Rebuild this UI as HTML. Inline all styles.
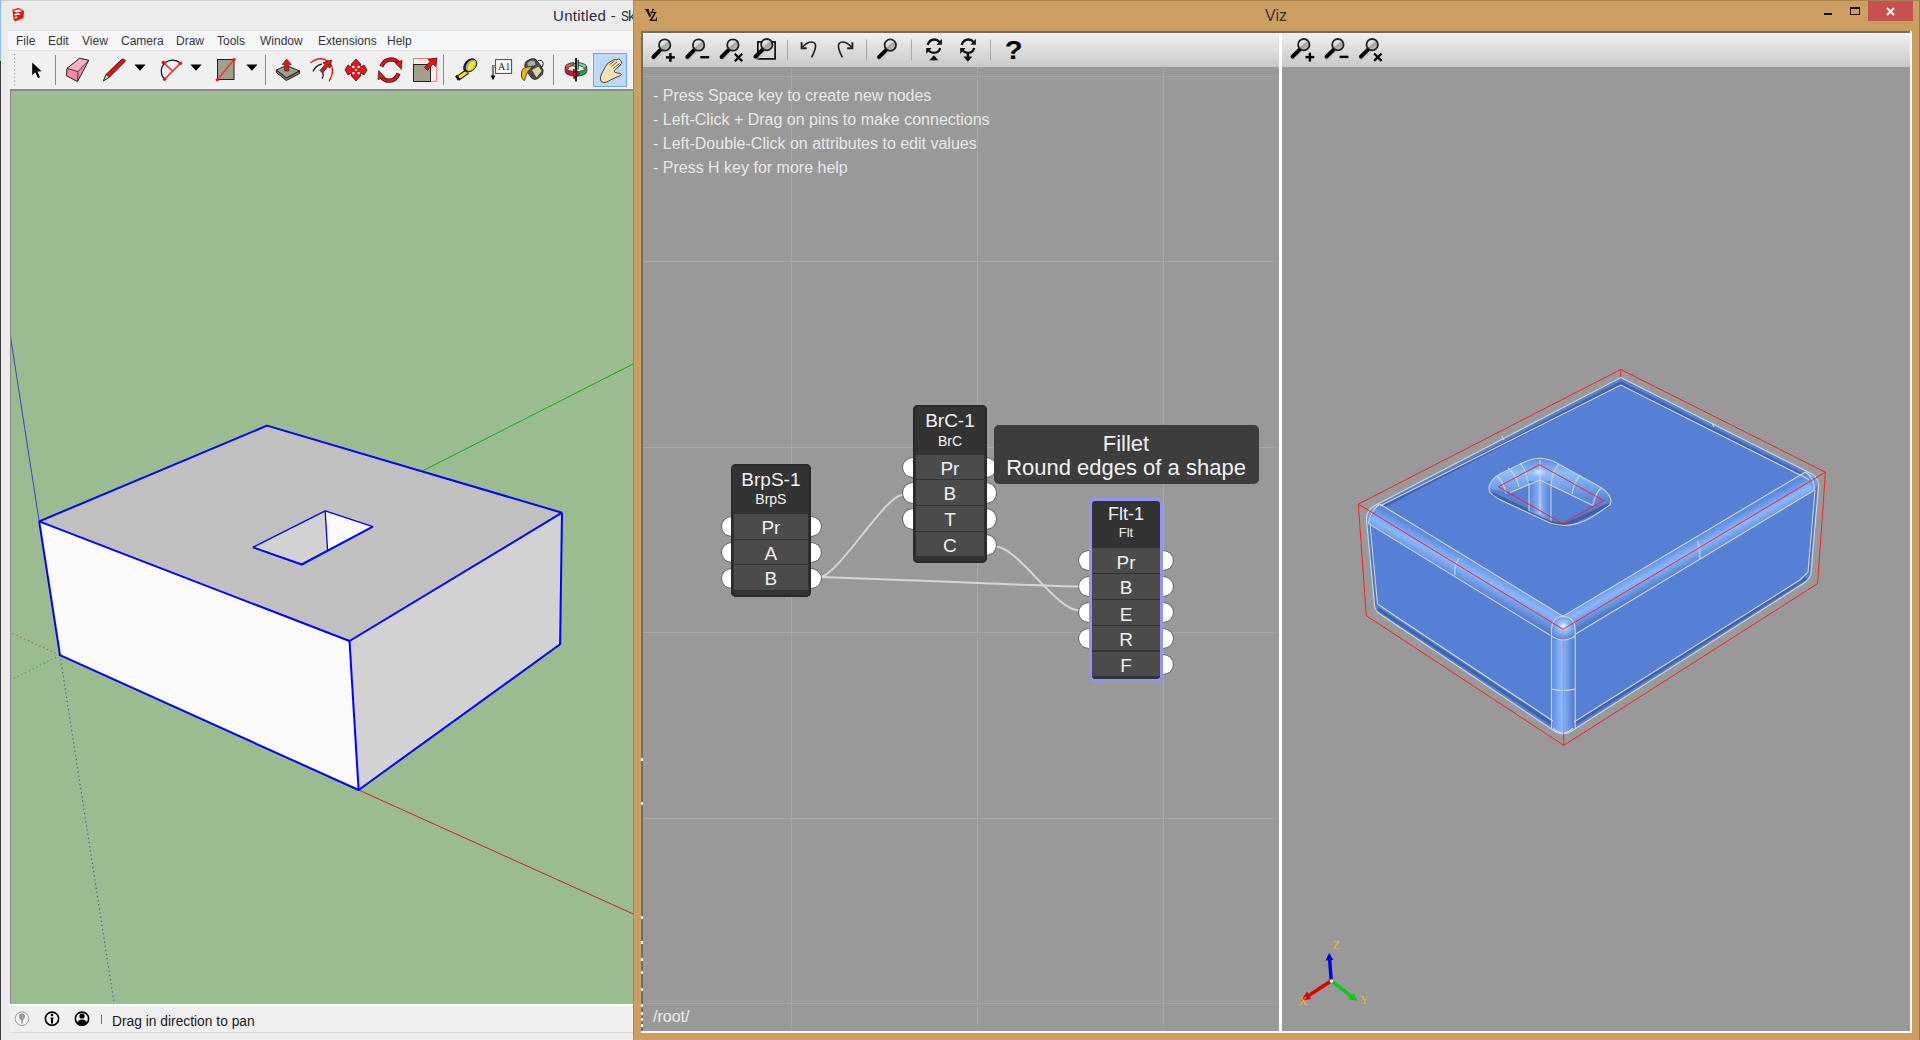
<!DOCTYPE html>
<html><head><meta charset="utf-8">
<style>
*{box-sizing:border-box;margin:0;padding:0}
html,body{width:1920px;height:1040px;overflow:hidden}
body{position:relative;background:#ebebeb;font-family:"Liberation Sans",sans-serif}
.a{position:absolute}
.menu span{position:absolute;top:3px;font-size:12px;color:#353540}
.ht{position:absolute;left:653px;margin-top:1px;font-size:16px;color:#e8e8e8;white-space:nowrap}
.node{position:absolute;background:#333;border-radius:5px;box-shadow:inset 0 0 0 2px #2a2a2a}
.node .t{position:absolute;left:0;right:0;text-align:center;color:#f2f2f2;white-space:nowrap}
.row{position:absolute;left:3px;right:3px;height:24px;background:#4b4b4b;color:#f0f0f0;font-size:19px;text-align:center;line-height:24px;padding-top:2px}
.pin{position:absolute;width:20px;height:19.5px;border-radius:50%;background:#fff;box-shadow:0 0 0 0.8px rgba(50,50,50,0.6)}
.flt{box-shadow:none;border-radius:2px}.flt .row{left:0;right:0}
</style></head>
<body>
<!-- ============ SketchUp window ============ -->
<div class="a" style="left:0;top:0;width:633px;height:1040px;background:#ebebeb"></div>
<div class="a" style="left:0;top:0;width:633px;height:1px;background:#cfcfcf"></div>
<div class="a" style="left:0;top:0;width:1px;height:61px;background:#8cbcf0"></div>
<div class="a" style="left:0;top:61px;width:1px;height:979px;background:#3a3a3a"></div>
<!-- title -->
<div class="a" style="left:553px;top:7px;font-size:15px;color:#2b2b3b;white-space:nowrap;letter-spacing:0.3px">Untitled - <span style="display:inline-block;width:7.6px;transform:scaleX(0.8);transform-origin:0 0">S</span>ketchUp</div>
<!-- menu bar -->
<div class="a menu" style="left:8px;top:30px;width:625px;height:20px;background:#f5f6f7;border-top:1px solid #dcdcdc">
<span style="left:8px">File</span><span style="left:40px">Edit</span><span style="left:74px">View</span><span style="left:113px">Camera</span><span style="left:168px">Draw</span><span style="left:209px">Tools</span><span style="left:252px">Window</span><span style="left:310px">Extensions</span><span style="left:379px">Help</span>
</div>
<!-- toolbar -->
<div class="a" style="left:8px;top:50px;width:625px;height:39px;background:#f0f0f0;border-top:1px solid #e2e2e2"></div>
<div class="a" style="left:10px;top:89px;width:623px;height:2px;background:#8a8a8a"></div>
<div class="a" style="left:10px;top:89px;width:1px;height:915px;background:#8a8a8a"></div>
<!-- sketchup toolbar icons -->
<svg class="a" style="left:0;top:0" width="633" height="91">
<defs>
<linearGradient id="lens" x1="0" y1="0" x2="1" y2="1"><stop offset="0" stop-color="#f4f4f4"/><stop offset="0.5" stop-color="#c8c8c8"/><stop offset="0.55" stop-color="#9a9a9a"/><stop offset="1" stop-color="#b8b8b8"/></linearGradient>
</defs>
<!-- gripper -->
<line x1="14.5" y1="54" x2="14.5" y2="88" stroke="#9a9a9a" stroke-width="1.2" stroke-dasharray="1.2,2.6"/>
<!-- select arrow -->
<path d="M32.2,62.5 L32.2,75.5 L35.3,72.3 L38,78.2 L40,77.2 L37.4,71.4 L41.5,71.2 Z" fill="#000"/>
<!-- separators -->
<g stroke="#8c8c8c" stroke-width="1">
<line x1="55.5" y1="55" x2="55.5" y2="85"/><line x1="265.5" y1="55" x2="265.5" y2="85"/>
<line x1="443.5" y1="55" x2="443.5" y2="85"/><line x1="553.5" y1="55" x2="553.5" y2="85"/>
</g>
<!-- eraser -->
<path d="M67,68.5 L79.6,58.3 L88.7,60.4 L86.7,64.3 L77.5,81.5 L66.4,75.7 Z" fill="#f48aa8" stroke="#222" stroke-width="1" stroke-linejoin="round"/>
<path d="M67,68.5 L79.6,58.3 L88.7,60.4 L78,71.5 Z" fill="#f9b0c8" stroke="#222" stroke-width="0.8"/>
<line x1="78" y1="71.5" x2="77.5" y2="81.5" stroke="#222" stroke-width="0.8"/>
<!-- pencil -->
<path d="M103.6,80.8 L106,74.5 L121.5,59.5 Q124,58 125,60.5 L125,61.5 L109.5,77 Z" fill="#e81010" stroke="#222" stroke-width="1"/>
<path d="M103.6,80.8 L106,74.5 L109.5,77 Z" fill="#e8e0a0" stroke="#222" stroke-width="0.8"/>
<!-- dropdowns -->
<g fill="#000">
<polygon points="134.4,64.6 145.6,64.6 140,70.8"/>
<polygon points="190.4,64.6 201.7,64.6 196,70.8"/>
<polygon points="246.3,64.6 257.5,64.6 251.9,70.8"/>
</g>
<!-- arc -->
<path d="M164.6,79.2 A11,11 0 1 1 180.4,63.3" fill="none" stroke="#111" stroke-width="1.2"/>
<g stroke="#f01010" stroke-width="1.3"><line x1="163.3" y1="62.5" x2="172" y2="70.5"/><line x1="164.6" y1="79.2" x2="180.4" y2="63.3"/></g>
<g fill="#f01010"><circle cx="163.3" cy="62.5" r="1.8"/><circle cx="180.4" cy="63.3" r="1.8"/><circle cx="164.6" cy="79.2" r="1.8"/></g>
<!-- rectangle -->
<rect x="217.5" y="59.5" width="16.5" height="20" fill="#a39f8a" stroke="#222" stroke-width="1"/>
<line x1="217.3" y1="79.8" x2="234" y2="59.5" stroke="#ff2a2a" stroke-width="1.3"/>
<circle cx="217.3" cy="79.8" r="1.6" fill="#f01010"/><circle cx="234" cy="59.5" r="1.6" fill="#f01010"/>
<!-- push pull -->
<path d="M276.3,70 L286.5,65.5 L299.6,71 L286.3,78 Z" fill="#a39f8a" stroke="#222" stroke-width="1"/>
<path d="M276.3,70 L276.3,72.5 L286.3,80.5 L299.6,73.5 L299.6,71 L286.3,78 Z" fill="#7e7a66" stroke="#222" stroke-width="1"/>
<path d="M286.7,59 L291.3,64.5 L288.8,64.5 L288.8,71 L284.6,71 L284.6,64.5 L282.1,64.5 Z" fill="#f01010" stroke="#222" stroke-width="0.6"/>
<!-- follow me -->
<path d="M310.5,63 Q320,55 329,62 Q336,70 329,81.3" fill="none" stroke="#f01010" stroke-width="1.3"/>
<path d="M313,71.5 Q316,65 322,64" fill="none" stroke="#222" stroke-width="1.3"/>
<path d="M322.5,72 Q324,76 322,78.5" fill="none" stroke="#222" stroke-width="1.3"/>
<path d="M331.5,60 L330,68 L327.8,66.5 L322.5,73 L320,70.5 L325,64.5 L323,62.8 Z" fill="#f01010" stroke="#222" stroke-width="0.8"/>
<!-- move -->
<path d="M356,59 L361,64.5 L359.5,64.5 L361.5,66.5 L364,65 L367,70 L364,75 L361.5,73.5 L359.5,75.5 L361,75.5 L356,81 L351,75.5 L352.5,75.5 L350.5,73.5 L348,75 L345,70 L348,65 L350.5,66.5 L352.5,64.5 L351,64.5 Z" fill="#f01010" stroke="#222" stroke-width="0.8" stroke-linejoin="round"/>
<g fill="#fff"><rect x="352.3" y="65.8" width="2.2" height="2.2"/><rect x="357.5" y="65.8" width="2.2" height="2.2"/><rect x="352.3" y="72" width="2.2" height="2.2"/><rect x="357.5" y="72" width="2.2" height="2.2"/><rect x="355" y="69" width="2" height="2"/></g>
<!-- rotate -->
<path d="M381.5,66.5 Q384,59.5 391,59.3 Q396.5,59.5 398.6,63.5" fill="none" stroke="#222" stroke-width="4.2"/>
<path d="M381.5,66.5 Q384,59.5 391,59.3 Q396.5,59.5 398.6,63.5" fill="none" stroke="#f01010" stroke-width="2.6"/>
<polygon points="401.3,69.5 395,62.5 402,60.5" fill="#f01010" stroke="#222" stroke-width="0.7"/>
<path d="M398.5,73.5 Q396,80.5 389,80.7 Q383.5,80.5 381.4,76.5" fill="none" stroke="#222" stroke-width="4.2"/>
<path d="M398.5,73.5 Q396,80.5 389,80.7 Q383.5,80.5 381.4,76.5" fill="none" stroke="#f01010" stroke-width="2.6"/>
<polygon points="378.7,70.5 385,77.5 378,79.5" fill="#f01010" stroke="#222" stroke-width="0.7"/>
<!-- scale -->
<rect x="413.5" y="58.5" width="23" height="23" fill="none" stroke="#ff6060" stroke-width="0.8"/>
<rect x="413.5" y="64.5" width="17" height="17" fill="#a39f8a" stroke="#222" stroke-width="1"/>
<path d="M437,58 L435.5,66.5 L433,64 L427.5,70.5 L424.5,67.5 L430,61.5 L428,59.5 Z" fill="#f01010" stroke="#222" stroke-width="0.8"/>
<!-- tape -->
<path d="M457.5,78.5 L467.5,71.5" stroke="#111" stroke-width="5.2" stroke-linecap="butt"/>
<path d="M459,77.4 L467.5,71.5" stroke="#f4e800" stroke-width="3.2"/>
<path d="M456.2,75.5 L458.8,79.8" stroke="#111" stroke-width="2.5"/>
<ellipse cx="469.8" cy="65.3" rx="5.6" ry="8" transform="rotate(40 469.8 65.3)" fill="#222"/>
<ellipse cx="471" cy="65.5" rx="4.8" ry="7" transform="rotate(40 471 65.5)" fill="#a8a8a8" stroke="#111" stroke-width="0.8"/>
<ellipse cx="471.4" cy="65.6" rx="2.6" ry="5" transform="rotate(30 471.4 65.6)" fill="#f6ee00"/>
<!-- text -->
<rect x="495.6" y="59.6" width="16" height="13.8" fill="#fff" stroke="#444" stroke-width="1"/>
<text x="498" y="70" font-family="Liberation Serif" font-size="10" fill="#222">A1</text>
<polyline points="495.5,66.3 493,66.3 493,76" fill="none" stroke="#555" stroke-width="2.2"/>
<polyline points="495.5,66.3 493,66.3 493,76" fill="none" stroke="#aaa" stroke-width="1"/>
<polygon points="490.6,75.5 495.4,75.5 493,80.2" fill="#000"/>
<!-- paint bucket -->
<path d="M526,61.5 Q531,57.5 535.5,59 L541,66 Q544.5,70 542.5,74.5 L538,78.5 Q535,80.5 532,78.5 L527.5,72.5 Q523,66 526,61.5 Z" fill="#4a4a4a" stroke="#222" stroke-width="0.8"/>
<path d="M527.5,63 Q531,59.5 534.5,61 L535.5,64.5 Q532,67.5 527.8,67 Z" fill="#9cb4ac"/>
<path d="M532,70 L538.5,66.5 L541.5,71 L536.5,77.5 Z" fill="#ddd4a0"/>
<path d="M537.5,61 Q542.5,59 543.2,63.5 Q543.5,67 540.5,68" fill="none" stroke="#222" stroke-width="1"/>
<path d="M521.5,73 Q522,68 527,67 L533,66 Q529,69.5 527,73 Q525.5,77 524.5,80.5 Q521,79.5 521.5,73 Z" fill="#f8b400" stroke="#222" stroke-width="0.8"/>
<!-- orbit -->
<g stroke="#1a1a1a" stroke-width="0.7" stroke-linejoin="round">
<path d="M565.2,67 L565.2,71.6 A10.8,4.6 0 0 0 576,76.2 L576,71.6 A10.8,4.6 0 0 1 565.2,67 Z" fill="#d2122e"/>
<path d="M586.8,67 L586.8,71.6 A10.8,4.6 0 0 1 576,76.2 L576,71.6 A10.8,4.6 0 0 0 586.8,67 Z" fill="#22a444"/>
<path d="M565.2,67 A10.8,4.6 0 0 1 574,62.5 L574.5,65.5 A8,2.8 0 0 0 568.5,68.8 Z" fill="#e05848"/>
<path d="M576,62.4 A10.8,4.6 0 0 1 586.8,67 L583.8,68.6 A8,2.8 0 0 0 577,65.4 Z" fill="#66d696"/>
<polygon points="573.5,69 579.8,73.8 573.8,79" fill="#d2122e"/>
<polygon points="578.5,60.2 572.6,65.2 578.2,69.5" fill="#66d696"/>
</g>
<line x1="576" y1="58" x2="576" y2="81.6" stroke="#111" stroke-width="1.8"/>
<!-- pan selected -->
<rect x="593.5" y="53.5" width="33" height="33" fill="#bcdaf8" stroke="#6ea8ee" stroke-width="1"/>
<path d="M601,81.5 Q599.5,78 601.5,74 L605.5,66.5 Q607,63.5 609,62.5 L613.5,60 Q615,59 616,60 L618.5,59.2 Q620,59 620.5,60.5 L621.8,62 Q622.2,63.5 621,64.5 L615.5,69.5 L614,71.5 Q615.5,73 617.5,73 L620.5,73.5 Q622,74.5 620.5,75.5 L614.5,78 Q610,80 607,82 Q604,83.5 601,81.5 Z" fill="#f2e2b2" stroke="#222" stroke-width="0.8"/>
<path d="M609.5,64.5 L614.5,61 M611.5,66.5 L617,62 M613.5,68.5 L619.5,63.5" fill="none" stroke="#333" stroke-width="0.7"/>
</svg>
<!-- viewport -->
<div class="a" style="left:11px;top:91px;width:622px;height:913px;background:#9bbc90"></div>
<!-- sketchup scene -->
<svg class="a" style="left:0;top:0" width="633" height="1040">
<defs><clipPath id="vp"><rect x="11" y="91" width="622" height="913"/></clipPath></defs>
<g clip-path="url(#vp)">
<line x1="12.6" y1="633.5" x2="60" y2="655.2" stroke="#c03030" stroke-width="1.2" stroke-dasharray="1.2,3" opacity="0.75"/>
<line x1="13.8" y1="678.5" x2="60" y2="655.2" stroke="#20a020" stroke-width="1.2" stroke-dasharray="1.2,3" opacity="0.75"/>
<line x1="60" y1="655.2" x2="114.2" y2="1004" stroke="#3030c0" stroke-width="1.2" stroke-dasharray="1.2,3" opacity="0.75"/>
<line x1="358.6" y1="790" x2="640" y2="917" stroke="#d02020" stroke-width="1"/>
<line x1="423.1" y1="470.6" x2="640" y2="360.5" stroke="#10b010" stroke-width="1"/>
<line x1="-10" y1="205" x2="39.2" y2="521.4" stroke="#2020d0" stroke-width="0.9" opacity="0.85"/>
<polygon points="267,425.6 562,512.7 349.5,641 39.2,521.4" fill="#c0c0c0"/>
<polygon points="39.2,521.4 349.5,641 358.6,790 60,655.2" fill="#fafafa"/>
<polygon points="349.5,641 562,512.7 560.1,644.2 358.6,790" fill="#d2d2d2"/>
<polygon points="252.9,547.3 325.2,510.9 327.5,550 301.7,564.5" fill="#d2d2d2"/>
<polygon points="325.2,510.9 372.8,526.6 327.5,550" fill="#fafafa"/>
<g stroke="#0000ff" fill="none" stroke-linejoin="round">
<polyline points="39.2,521.4 267,425.6 562,512.7" stroke-width="2"/>
<polyline points="39.2,521.4 349.5,641 562,512.7" stroke-width="2"/>
<polyline points="39.2,521.4 60,655.2 358.6,790 560.1,644.2 562,512.7" stroke-width="2"/>
<line x1="349.5" y1="641" x2="358.6" y2="790" stroke-width="2"/>
<polyline points="252.9,547.3 325.2,510.9 372.8,526.6" stroke-width="1.3"/>
<polyline points="252.9,547.3 301.7,564.5 372.8,526.6" stroke-width="2"/>
<line x1="325.2" y1="510.9" x2="327.5" y2="550" stroke-width="1.3"/>
</g>
</g>
</svg>
<!-- status bar -->
<div class="a" style="left:9px;top:1004px;width:624px;height:2px;background:#fff"></div>
<div class="a" style="left:9px;top:1006px;width:624px;height:27px;background:#efefef;border-bottom:1px solid #d8d8d8"></div>
<div class="a" style="left:112px;top:1013.5px;font-size:13.8px;color:#1a1a1a;white-space:nowrap">Drag in direction to pan</div>

<!-- sketchup logo -->
<svg class="a" style="left:11px;top:7px" width="16" height="16">
<path d="M1.5,2.5 L8,1 L13,4 L12.5,11 L4,14.5 L2.5,12 Z" fill="#e81010"/>
<path d="M2.5,3.5 L8.5,2.5 L11,4.5 L5,5.5 Z M3,7 L8,6 L9.5,7.5 L4,8.5 Z M3.5,10 L6,9.5 L6.5,11 L4,11.5 Z" fill="#fff"/>
</svg>
<!-- status icons -->
<svg class="a" style="left:0;top:1004px" width="120" height="36">
<circle cx="22" cy="14.7" r="6.8" fill="none" stroke="#9a9a9a" stroke-width="1"/>
<path d="M22,9.5 Q25,9.5 25,12.5 Q25,14.5 23,16 L22.5,19.5 L21.5,19.5 L21,16 Q19,14.5 19,12.5 Q19,9.5 22,9.5 Z" fill="#9a9a9a"/>
<circle cx="52" cy="14.7" r="6.6" fill="none" stroke="#000" stroke-width="1.6"/>
<circle cx="52" cy="11" r="1.3" fill="#000"/>
<path d="M50.3,13.5 L53.7,13.5 L53,16 L53,19.5 L51,19.5 L51,16 Z" fill="#000"/>
<circle cx="82" cy="14.7" r="6.6" fill="none" stroke="#000" stroke-width="1.6"/>
<circle cx="82" cy="12" r="2.6" fill="#000"/>
<path d="M77,19 Q78,15.5 82,15.5 Q86,15.5 87,19 Q85,21 82,21 Q79,21 77,19 Z" fill="#000"/>
<line x1="101.5" y1="11" x2="101.5" y2="20" stroke="#777" stroke-width="1"/>
</svg>
<!-- ============ Viz window ============ -->
<div class="a" style="left:633px;top:0;width:1287px;height:1040px;background:#cc9e62"></div>
<div class="a" style="left:633px;top:0;width:1287px;height:1px;background:#a8844e"></div>
<div class="a" style="left:633px;top:0;width:1px;height:1040px;background:#b08850"></div>
<div class="a" style="left:1919px;top:0;width:1px;height:1040px;background:#9a7a48"></div>
<div class="a" style="left:1265px;top:7px;font-size:16px;color:#333;white-space:nowrap">Viz</div>
<!-- inner frame -->
<div class="a" style="left:641px;top:31px;width:1271px;height:1002px;background:#fff"></div>
<div class="a" style="left:641px;top:31px;width:1269px;height:2px;background:#6e6e6e"></div>
<div class="a" style="left:641px;top:31px;width:2px;height:1000px;background:#6e6e6e"></div>
<div class="a" style="left:641px;top:758px;width:2px;height:3px;background:#fff"></div><div class="a" style="left:641px;top:802px;width:2px;height:3px;background:#fff"></div><div class="a" style="left:641px;top:916px;width:2px;height:3px;background:#fff"></div><div class="a" style="left:641px;top:941px;width:2px;height:3px;background:#fff"></div><div class="a" style="left:641px;top:958px;width:2px;height:3px;background:#fff"></div><div class="a" style="left:641px;top:971px;width:2px;height:3px;background:#fff"></div><div class="a" style="left:641px;top:988px;width:2px;height:3px;background:#fff"></div><div class="a" style="left:641px;top:1004px;width:2px;height:3px;background:#fff"></div><div class="a" style="left:641px;top:1012px;width:2px;height:3px;background:#fff"></div><div class="a" style="left:641px;top:1018px;width:2px;height:3px;background:#fff"></div><div class="a" style="left:641px;top:1024px;width:2px;height:3px;background:#fff"></div>
<!-- toolbars -->
<div class="a" style="left:643px;top:33px;width:636px;height:34px;background:linear-gradient(#f0f0f0,#c9c9c9)"></div>
<div class="a" style="left:1282px;top:33px;width:628px;height:34px;background:linear-gradient(#f0f0f0,#c9c9c9)"></div>
<!-- canvases -->
<div class="a" style="left:643px;top:67px;width:636px;height:964px;background:#999"></div>
<div class="a" style="left:1282px;top:67px;width:628px;height:964px;background:#999"></div>

<div class="a" style="left:791px;top:67px;width:1px;height:964px;background:#a6a6a6"></div>
<div class="a" style="left:977px;top:67px;width:1px;height:964px;background:#a6a6a6"></div>
<div class="a" style="left:1163px;top:67px;width:1px;height:964px;background:#a6a6a6"></div>
<div class="a" style="left:643px;top:76px;width:636px;height:1px;background:#a6a6a6"></div>
<div class="a" style="left:643px;top:261px;width:636px;height:1px;background:#a6a6a6"></div>
<div class="a" style="left:643px;top:447px;width:636px;height:1px;background:#a6a6a6"></div>
<div class="a" style="left:643px;top:632px;width:636px;height:1px;background:#a6a6a6"></div>
<div class="a" style="left:643px;top:818px;width:636px;height:1px;background:#a6a6a6"></div>
<div class="a" style="left:643px;top:1003px;width:636px;height:1px;background:#a6a6a6"></div>
<svg class="a" style="left:0;top:0" width="1920" height="1040">
<g fill="none" stroke="#d6d6d6" stroke-width="2">
<path d="M820,577 C837,577 885.4,495 902.4,495"/>
<path d="M820,577 C850,577.5 1050,586.5 1079,586.5"/>
<path d="M995.5,546.5 C1017.5,546.5 1056.3,610.3 1078.3,610.3"/>
</g></svg>
<div class="pin" style="left:721.5px;top:516.5px"></div>
<div class="pin" style="left:800.8px;top:516.5px"></div>
<div class="pin" style="left:721.5px;top:542.8px"></div>
<div class="pin" style="left:800.8px;top:542.8px"></div>
<div class="pin" style="left:721.5px;top:568.8px"></div>
<div class="pin" style="left:800.8px;top:568.8px"></div>
<div class="pin" style="left:903.2px;top:457.6px"></div>
<div class="pin" style="left:976.4px;top:457.6px"></div>
<div class="pin" style="left:903.2px;top:483.4px"></div>
<div class="pin" style="left:976.4px;top:483.4px"></div>
<div class="pin" style="left:903.2px;top:509.4px"></div>
<div class="pin" style="left:976.4px;top:509.4px"></div>
<div class="pin" style="left:976.4px;top:535.2px"></div>
<div class="pin" style="left:1078.9px;top:550.5px"></div>
<div class="pin" style="left:1152.8px;top:550.5px"></div>
<div class="pin" style="left:1078.9px;top:576.5px"></div>
<div class="pin" style="left:1152.8px;top:576.5px"></div>
<div class="pin" style="left:1078.9px;top:602.6px"></div>
<div class="pin" style="left:1152.8px;top:602.6px"></div>
<div class="pin" style="left:1078.9px;top:628.8px"></div>
<div class="pin" style="left:1152.8px;top:628.8px"></div>
<div class="pin" style="left:1152.8px;top:654.9px"></div>
<div class="node" style="left:730.9px;top:464px;width:80px;height:132.5px">
<div class="t" style="top:5px;font-size:19px">BrpS-1</div>
<div class="t" style="top:27px;font-size:14px">BrpS</div>
<div class="row" style="top:50.0px;height:24.5px;line-height:24.5px">Pr</div>
<div class="row" style="top:75.5px;height:24.7px;line-height:24.7px">A</div>
<div class="row" style="top:101.2px;height:24.4px;line-height:24.4px">B</div>
</div>
<div class="node" style="left:913.2px;top:404.5px;width:73.5px;height:158.3px">
<div class="t" style="top:5px;font-size:19px">BrC-1</div>
<div class="t" style="top:28px;font-size:14px">BrC</div>
<div class="row" style="top:50.2px;height:24.3px;line-height:24.3px">Pr</div>
<div class="row" style="top:75.5px;height:24.8px;line-height:24.8px">B</div>
<div class="row" style="top:101.3px;height:24.9px;line-height:24.9px">T</div>
<div class="row" style="top:127.2px;height:24.3px;line-height:24.3px">C</div>
</div>
<div class="node flt" style="left:1092px;top:500.5px;width:68px;height:179px">
<div class="t" style="top:3px;font-size:18px">Flt-1</div>
<div class="t" style="top:24px;font-size:13px">Flt</div>
<div class="row" style="top:47.2px;height:25.0px;line-height:25.0px">Pr</div>
<div class="row" style="top:73.2px;height:24.9px;line-height:24.9px">B</div>
<div class="row" style="top:99.1px;height:25.0px;line-height:25.0px">E</div>
<div class="row" style="top:125.1px;height:24.9px;line-height:24.9px">R</div>
<div class="row" style="top:151.0px;height:24.3px;line-height:24.3px">F</div>
</div>
<div class="a" style="left:1089.2px;top:498px;width:73.5px;height:183.5px;border:3px solid #9393f5;border-radius:6px"></div>
<div class="a" style="left:993.5px;top:424.5px;width:265px;height:59px;background:#3d3d3d;border-radius:5px"></div>
<div class="a" style="left:993.5px;top:432px;width:265px;text-align:center;font-size:22px;color:#f2f2f2;line-height:23.5px">Fillet<br>Round edges of a shape</div>
<!-- viz scene -->
<svg class="a" style="left:0;top:0" width="1920" height="1040">
<defs>
<linearGradient id="t1" gradientUnits="userSpaceOnUse" x1="1480" y1="562" x2="1466" y2="588">
<stop offset="0" stop-color="#5a88dc"/><stop offset="0.45" stop-color="#8ab8ff"/><stop offset="1" stop-color="#5078cc"/></linearGradient>
<linearGradient id="t2" gradientUnits="userSpaceOnUse" x1="1700" y1="534" x2="1712" y2="556">
<stop offset="0" stop-color="#5a88dc"/><stop offset="0.45" stop-color="#8ab8ff"/><stop offset="1" stop-color="#5078cc"/></linearGradient>
<linearGradient id="t3" gradientUnits="userSpaceOnUse" x1="1551" y1="0" x2="1575" y2="0">
<stop offset="0" stop-color="#5a88dc"/><stop offset="0.45" stop-color="#8ab8ff"/><stop offset="1" stop-color="#5078cc"/></linearGradient>
<radialGradient id="hl" cx="0.5" cy="0.5" r="0.5"><stop offset="0" stop-color="#e8ffff"/><stop offset="1" stop-color="#8ab8ff" stop-opacity="0"/></radialGradient>
<linearGradient id="hg" gradientUnits="userSpaceOnUse" x1="0" y1="458" x2="0" y2="500">
<stop offset="0" stop-color="#5a88dc"/><stop offset="0.35" stop-color="#8cc0ff"/><stop offset="1" stop-color="#5a86d8"/></linearGradient>
<linearGradient id="t4" gradientUnits="userSpaceOnUse" x1="1529" y1="0" x2="1551" y2="0"><stop offset="0" stop-color="#5580d6"/><stop offset="0.5" stop-color="#8ab8ff"/><stop offset="1" stop-color="#5580d6"/></linearGradient>
<radialGradient id="sph" cx="0.5" cy="0.42" r="0.55"><stop offset="0" stop-color="#f0ffff"/><stop offset="0.3" stop-color="#9ccaff"/><stop offset="1" stop-color="#5a88dc"/></radialGradient>
</defs>
<!-- blue silhouette -->
<path d="M1620.8,377.5 L1812,474 Q1819,478 1818.5,486 L1811,573 Q1810,579 1804,583 L1570,732 Q1563,736 1556,732 L1380,614 Q1375,611 1374.5,605 L1366.5,520 Q1366,511 1374,506 Z" fill="#5580d6"/>
<!-- dark strips -->
<polyline points="1378,509 1620.8,383 1811,479" fill="none" stroke="#3d62b0" stroke-width="3"/>
<polyline points="1378,609 1563,731 1806,578" fill="none" stroke="#3d62b0" stroke-width="3.2"/>
<line x1="1369.5" y1="520" x2="1377" y2="606" stroke="#4a72c8" stroke-width="2.5"/>
<line x1="1815.5" y1="487" x2="1808.5" y2="574" stroke="#4a72c8" stroke-width="2.5"/>
<!-- tubes -->
<polygon points="1379.8,504 1563,616.2 1549.9,635 1367.7,523.1" fill="url(#t1)"/>
<path d="M1367.7,523.1 L1379.8,504 Q1372,505 1368.5,511 Q1366,517 1367.7,523.1 Z" fill="#6c9cf0"/>
<polygon points="1563,616.2 1805.5,472 1814.2,490.2 1575.2,634.2" fill="url(#t2)"/>
<path d="M1805.5,472 L1814.2,490.2 Q1819.5,484 1817,477 Q1812,472 1805.5,472 Z" fill="#6c9cf0"/>
<path d="M1551.5,628 L1575.2,628 L1575.2,722 Q1575.2,734 1563,734 Q1551.5,734 1551.5,722 Z" fill="url(#t3)"/>
<path d="M1551.5,640 L1551.5,630 Q1551.5,617 1563,616.5 Q1575.2,617 1575.2,630 L1575.2,640 Z" fill="url(#sph)"/>
<!-- white lines -->
<g fill="none" stroke="#d6d6d6" stroke-width="1.1">
<path d="M1620.8,377.5 L1812,474 Q1819,478 1818.5,486 L1811,573 Q1810,579 1804,583 L1570,732 Q1563,736 1556,732 L1380,614 Q1375,611 1374.5,605 L1366.5,520 Q1366,511 1374,506 Z"/>
<polyline points="1380,506 1620.8,385 1809,479.5"/>
<polyline points="1379.8,504 1563,616.2 1805.5,472"/>
<polyline points="1367.7,523.1 1549.9,635"/>
<polyline points="1575.2,634.2 1814.2,490.2"/>
<path d="M1551.5,728 L1551.5,631 Q1551.5,617 1563,616.5 Q1575.2,617 1575.2,631 L1575.2,728"/>
<path d="M1551.5,636 Q1563,644 1575.2,636"/>
<path d="M1551.5,689 Q1563,692 1575.2,689"/>
<path d="M1553,728 Q1563,738 1573,728"/>
<polyline points="1370,524 1377.5,604 1390,612.5 1553,721"/>
<polyline points="1574,722 1800,580 1808,572 1815,490"/>
<path d="M1459,558 Q1454,565 1455,575"/>
<path d="M1697.5,541 Q1701,550 1699.5,560"/>
<path d="M1379.8,504 Q1371,510 1368.5,523"/>
<path d="M1805.5,472 Q1814,477 1814.5,490"/>
<line x1="1502" y1="436" x2="1504" y2="440"/><line x1="1712" y1="423" x2="1714" y2="427"/>
</g>
<!-- hole -->
<path d="M1489,489 Q1489,480 1500,474 L1527,461 Q1540,455 1555,462 L1600,487 Q1614,496 1610,505 L1592,517 Q1570,530 1550,523 L1505,502 Q1489,495 1489,489 Z" fill="#5580d6"/>
<path d="M1489.5,489 Q1490,479 1501,474 L1527,461.5 Q1540,456 1554,462 L1600,487.5 Q1613,495 1611,503 L1593,505.5 L1540,480 L1510,492.5 Z" fill="url(#hg)"/>
<path d="M1492,494 L1551,522 Q1562,527 1572,522 L1609,505" fill="none" stroke="#3a5aa6" stroke-width="4" opacity="0.85"/>
<path d="M1529,481 L1551,481 L1551,521 L1529,511 Z" fill="url(#t4)"/>
<ellipse cx="1539" cy="472" rx="10" ry="6" fill="url(#hl)"/>
<g fill="none" stroke="#d4d4d4" stroke-width="1.1">
<path d="M1489,489 Q1489,480 1500,474 L1527,461 Q1540,455 1555,462 L1600,487 Q1614,496 1610,505 L1592,517 Q1570,530 1550,523 L1505,502 Q1489,495 1489,489 Z"/>
<polyline points="1510,492.5 1540,480 1593,505.5"/>
<line x1="1529" y1="483" x2="1529" y2="511"/><line x1="1551" y1="484" x2="1551" y2="521"/>
<line x1="1540" y1="460" x2="1540" y2="514"/>
<path d="M1497,476 Q1504,482 1506,494"/><path d="M1508,468 Q1516,474 1519,487"/><path d="M1520,463 Q1526,470 1528,482"/>
<path d="M1559,464 Q1552,472 1551,484"/><path d="M1580,475 Q1574,482 1572,494"/><path d="M1601,488 Q1595,494 1593,505"/>
</g>
<!-- red bbox -->
<g fill="none" stroke="#ff2020" stroke-width="1">
<polyline points="1358.3,504.1 1620.8,369.5 1825.4,472.2"/>
<polyline points="1358.3,504.1 1563,629.3 1825.4,472.2"/>
<polyline points="1358.3,504.1 1366.3,615.7 1563.8,745.4 1817.6,583.6 1825.4,472.2"/>
<line x1="1563" y1="629.3" x2="1563.7" y2="734" stroke="#f07090" opacity="0.7"/><line x1="1563.7" y1="734" x2="1563.8" y2="745.4"/>
<line x1="1620.8" y1="369.5" x2="1620.8" y2="377"/>
<polygon points="1539.5,464.7 1603.7,500.6 1562.6,523.5 1498.2,486.8"/>
</g>
<!-- axis triad -->
<g stroke-linecap="butt">
<line x1="1331.3" y1="981" x2="1329.6" y2="959" stroke="#0000e0" stroke-width="3.4"/>
<polygon points="1325.5,960.5 1329.2,953 1333.3,960" fill="#0000e0"/>
<line x1="1331" y1="981" x2="1308" y2="996" stroke="#e00000" stroke-width="3.4"/>
<polygon points="1307,991.5 1301,1000.8 1311,999" fill="#e00000"/>
<line x1="1331.5" y1="981" x2="1351" y2="996" stroke="#00d000" stroke-width="3.4"/>
<polygon points="1348,999 1357.5,1001 1353.5,993" fill="#00d000"/>
<circle cx="1331.5" cy="981" r="1.8" fill="#fff"/>
</g>
<g font-family="Liberation Serif" font-size="12" fill="#e8b830">
<text x="1332.5" y="949">Z</text><text x="1298.8" y="1004.5">X</text><text x="1360" y="1004">Y</text>
</g>
</svg>
<!-- viz toolbar icons -->
<svg class="a" style="left:0;top:0" width="1920" height="70">
<defs>
<linearGradient id="lens2" x1="0.2" y1="0.1" x2="0.8" y2="0.9"><stop offset="0" stop-color="#f6f6f6"/><stop offset="0.45" stop-color="#d0d0d0"/><stop offset="0.5" stop-color="#a0a0a0"/><stop offset="1" stop-color="#c4c4c4"/></linearGradient>
</defs>
<g>
<line x1="653.4" y1="57.6" x2="660.7" y2="50.3" stroke="#bbb" stroke-width="3.6" stroke-linecap="round" opacity="0.6" transform="translate(1.2,1.2)"/>
<line x1="653.4" y1="57.0" x2="660.2" y2="50.2" stroke="#000" stroke-width="3.9" stroke-linecap="round"/>
<circle cx="664.7" cy="45" r="5.7" fill="url(#lens2)" stroke="#222" stroke-width="1.8"/>
<rect x="666" y="56.2" width="8.8" height="2.4" fill="#000"/><rect x="669.2" y="53" width="2.4" height="8.8" fill="#000"/></g><g>
<line x1="687.3" y1="57.6" x2="694.6" y2="50.3" stroke="#bbb" stroke-width="3.6" stroke-linecap="round" opacity="0.6" transform="translate(1.2,1.2)"/>
<line x1="687.3" y1="57.0" x2="694.1" y2="50.2" stroke="#000" stroke-width="3.9" stroke-linecap="round"/>
<circle cx="698.6" cy="45" r="5.7" fill="url(#lens2)" stroke="#222" stroke-width="1.8"/>
<rect x="700.3" y="56" width="8.8" height="2.4" fill="#000"/></g><g>
<line x1="721.6" y1="57.6" x2="728.9" y2="50.3" stroke="#bbb" stroke-width="3.6" stroke-linecap="round" opacity="0.6" transform="translate(1.2,1.2)"/>
<line x1="721.6" y1="57.0" x2="728.4" y2="50.2" stroke="#000" stroke-width="3.9" stroke-linecap="round"/>
<circle cx="732.9" cy="45" r="5.7" fill="url(#lens2)" stroke="#222" stroke-width="1.8"/>
<path d="M734.8,53.8 L742.2,61.2 M742.2,53.8 L734.8,61.2" stroke="#000" stroke-width="2.2"/></g><rect x="757.8" y="41.9" width="17.3" height="17" fill="none" stroke="#000" stroke-width="1.6"/><g>
<line x1="755.5" y1="57.3" x2="762.8" y2="50.0" stroke="#bbb" stroke-width="3.6" stroke-linecap="round" opacity="0.6" transform="translate(1.2,1.2)"/>
<line x1="755.5" y1="56.7" x2="762.3" y2="49.9" stroke="#000" stroke-width="3.9" stroke-linecap="round"/>
<circle cx="766.8" cy="44.7" r="5.7" fill="url(#lens2)" stroke="#222" stroke-width="1.8"/>
</g><g>
<line x1="879.0" y1="57.7" x2="886.3" y2="50.4" stroke="#bbb" stroke-width="3.6" stroke-linecap="round" opacity="0.6" transform="translate(1.2,1.2)"/>
<line x1="879.0" y1="57.1" x2="885.8" y2="50.3" stroke="#000" stroke-width="3.9" stroke-linecap="round"/>
<circle cx="890.3" cy="45.1" r="5.7" fill="url(#lens2)" stroke="#222" stroke-width="1.8"/>
</g><g transform="translate(-5.7,-0.3)"><g>
<line x1="1298.2" y1="57.6" x2="1305.5" y2="50.3" stroke="#bbb" stroke-width="3.6" stroke-linecap="round" opacity="0.6" transform="translate(1.2,1.2)"/>
<line x1="1298.2" y1="57.0" x2="1305.0" y2="50.2" stroke="#000" stroke-width="3.9" stroke-linecap="round"/>
<circle cx="1309.5" cy="45" r="5.7" fill="url(#lens2)" stroke="#222" stroke-width="1.8"/>
<rect x="1311.2" y="56.2" width="8.8" height="2.4" fill="#000"/><rect x="1314.4" y="53" width="2.4" height="8.8" fill="#000"/></g><g>
<line x1="1332.3" y1="57.6" x2="1339.6" y2="50.3" stroke="#bbb" stroke-width="3.6" stroke-linecap="round" opacity="0.6" transform="translate(1.2,1.2)"/>
<line x1="1332.3" y1="57.0" x2="1339.1" y2="50.2" stroke="#000" stroke-width="3.9" stroke-linecap="round"/>
<circle cx="1343.6" cy="45" r="5.7" fill="url(#lens2)" stroke="#222" stroke-width="1.8"/>
<rect x="1345.3" y="56" width="8.8" height="2.4" fill="#000"/></g><g>
<line x1="1366.6" y1="57.6" x2="1373.9" y2="50.3" stroke="#bbb" stroke-width="3.6" stroke-linecap="round" opacity="0.6" transform="translate(1.2,1.2)"/>
<line x1="1366.6" y1="57.0" x2="1373.4" y2="50.2" stroke="#000" stroke-width="3.9" stroke-linecap="round"/>
<circle cx="1377.9" cy="45" r="5.7" fill="url(#lens2)" stroke="#222" stroke-width="1.8"/>
<path d="M1379.8,53.8 L1387.2,61.2 M1387.2,53.8 L1379.8,61.2" stroke="#000" stroke-width="2.2"/></g>
</g>
<g stroke="#a8a8a8" stroke-width="1"><line x1="787.5" y1="39.5" x2="787.5" y2="60.5"/><line x1="866.5" y1="39.5" x2="866.5" y2="60.5"/><line x1="911.5" y1="39.5" x2="911.5" y2="60.5"/><line x1="990.5" y1="39.5" x2="990.5" y2="60.5"/></g>
<!-- undo redo -->
<path d="M811.6,57.3 Q815,51 815.5,47 Q816,42 811.5,42 Q807,42 802.5,47" fill="none" stroke="#222" stroke-width="1.7"/>
<path d="M801.6,42.2 L801.6,48.3 L806.8,48.3" fill="none" stroke="#222" stroke-width="1.9"/>
<path d="M842.4,57.3 Q839,51 838.5,47 Q838,42 842.5,42 Q847,42 851.5,47" fill="none" stroke="#222" stroke-width="1.7"/>
<path d="M852.4,42.2 L852.4,48.3 L847.2,48.3" fill="none" stroke="#222" stroke-width="1.9"/>
<!-- refresh up -->
<g transform="translate(0,0)">
<path d="M927.6,44.8 Q929.5,39.5 934.5,39.5 Q937.5,39.5 939.5,42" fill="none" stroke="#111" stroke-width="2.3"/>
<polygon points="941.9,38.7 941.9,44.8 936.6,44.8" fill="#111"/>
<path d="M940.2,48 Q938.8,52.8 934,52.8 Q930.5,52.8 928.6,50.5" fill="none" stroke="#111" stroke-width="2.3"/>
<polygon points="926.2,47.9 926.2,54 931.6,47.9" fill="#111"/>
<polygon points="929.4,60.3 938.4,60.3 933.9,55.3" fill="#111"/><rect x="932.6" y="58" width="2.6" height="2.3" fill="#111"/></g>
<g transform="translate(34,0)">
<path d="M927.6,44.8 Q929.5,39.5 934.5,39.5 Q937.5,39.5 939.5,42" fill="none" stroke="#111" stroke-width="2.3"/>
<polygon points="941.9,38.7 941.9,44.8 936.6,44.8" fill="#111"/>
<path d="M940.2,48 Q938.8,52.8 934,52.8 Q930.5,52.8 928.6,50.5" fill="none" stroke="#111" stroke-width="2.3"/>
<polygon points="926.2,47.9 926.2,54 931.6,47.9" fill="#111"/>
<rect x="932.6" y="53" width="2.6" height="4" fill="#111"/><polygon points="929.4,56.6 938.4,56.6 933.9,61.7" fill="#111"/></g>
<!-- help -->
<text x="1005.6" y="59" font-family="Liberation Sans" font-weight="bold" font-size="26.5" fill="#000" transform="translate(1014,0) scale(1.1,1) translate(-1014,0)">?</text>
</svg>
<!-- window controls -->
<div class="a" style="left:1824px;top:13px;width:8px;height:2px;background:#111"></div>
<div class="a" style="left:1850px;top:7px;width:10px;height:8px;border:1px solid #111;border-top-width:2px"></div>
<div class="a" style="left:1868px;top:1px;width:45px;height:20px;background:#c75050"></div>
<svg class="a" style="left:1868px;top:1px" width="45" height="20"><path d="M19,7 L26,14 M26,7 L19,14" stroke="#fff" stroke-width="1.8"/></svg>
<!-- viz logo -->
<svg class="a" style="left:640px;top:5px" width="22" height="20"><g transform="translate(-640,-5)" fill="#111">
<polygon points="645.6,9.6 648.4,9.6 650.4,15.6 649.6,17.4"/>
<rect x="644.8" y="9" width="4.2" height="1.1"/>
<polygon points="652.6,9.6 653.5,9.6 650.1,17.4 649.7,16.6"/>
<rect x="652" y="9" width="2.2" height="1"/>
<rect x="650.3" y="11.8" width="6" height="1.1"/>
<polygon points="654.6,12.2 656.4,12.2 651.6,20.4 649.6,20.4"/>
<rect x="649.6" y="19.6" width="7.2" height="1.3"/>
<polygon points="656.2,17.6 657,17.6 656.8,20.9 655.6,20.9"/>
</g></svg>
<!-- help text -->
<div class="ht" style="top:86px">- Press Space key to create new nodes</div>
<div class="ht" style="top:110px">- Left-Click + Drag on pins to make connections</div>
<div class="ht" style="top:134px">- Left-Double-Click on attributes to edit values</div>
<div class="ht" style="top:158px">- Press H key for more help</div>
<div class="a" style="left:653px;top:1008px;font-size:16px;color:#eee">/root/</div>

</body></html>
